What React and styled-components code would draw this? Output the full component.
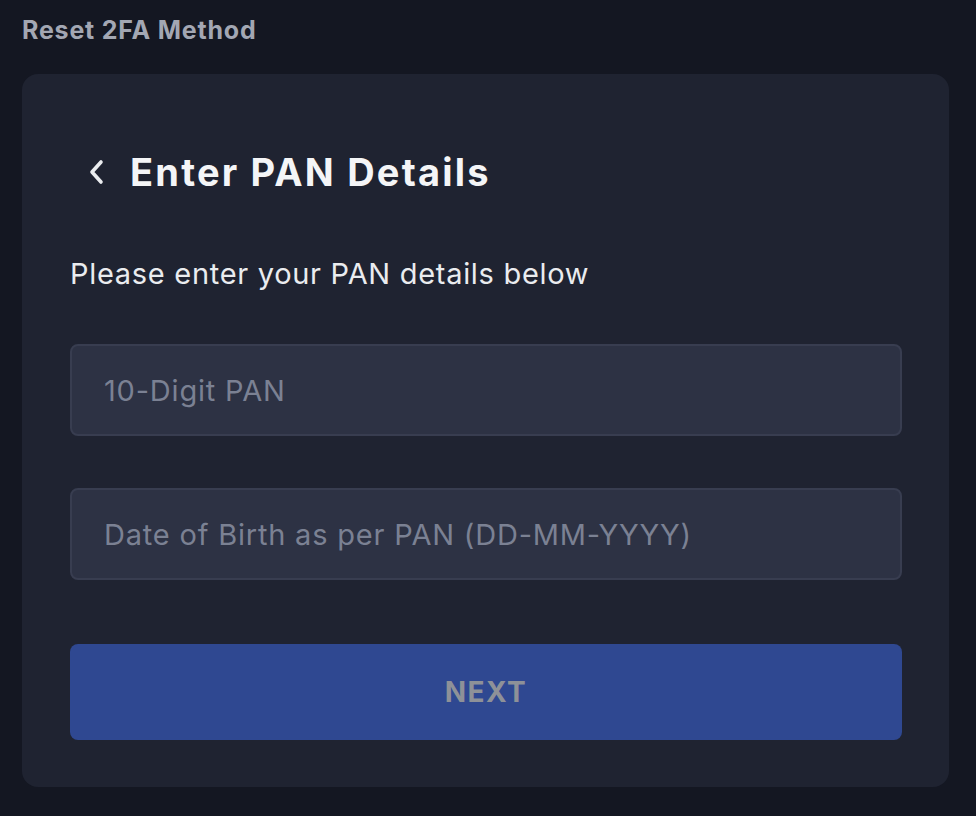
import React from "react";
import styled, { createGlobalStyle } from "styled-components";

const Global = createGlobalStyle`
  html, body { margin: 0; padding: 0; background: #141722; }
  body { font-family: Inter, "Noto Sans", sans-serif; }
  * { box-sizing: border-box; }
`;

const Page = styled.div`
  width: 976px;
  height: 816px;
  background: #141722;
  padding: 12px 27px 0 22px;
  display: flex;
  flex-direction: column;
`;

const PageTitle = styled.h1`
  margin: 0;
  font-size: 25px;
  line-height: 36px;
  font-weight: 700;
  color: #a3a7b3;
  letter-spacing: 0.8px;
`;

const Card = styled.section`
  margin-top: 26px;
  background: #1f2331;
  border-radius: 16px;
  padding: 70px 47px 47px 48px;
  display: flex;
  flex-direction: column;
`;

const HeadingRow = styled.div`
  display: flex;
  align-items: center;
  gap: 22px;
  padding-left: 14px;
`;

const BackButton = styled.button`
  background: none;
  border: 0;
  padding: 0;
  width: 24px;
  height: 30px;
  display: flex;
  align-items: center;
  justify-content: center;
  color: #eaecef;
  cursor: pointer;
`;

const Heading = styled.h2`
  margin: 0;
  font-size: 38px;
  line-height: 56px;
  font-weight: 700;
  color: #f4f5f7;
  letter-spacing: 2.2px;
`;

const Subtitle = styled.p`
  margin: 54px 0 0;
  font-size: 29px;
  line-height: 40px;
  color: #eaecef;
  letter-spacing: 0.7px;
`;

const Field = styled.input`
  margin-top: ${(p) => p.$gap}px;
  width: 100%;
  height: 92px;
  border-radius: 8px;
  border: 2px solid #383d50;
  background: #2d3244;
  padding: 0 32px;
  font-family: inherit;
  font-size: 29px;
  color: #eaecef;
  outline: none;
  letter-spacing: 0.8px;
  &::placeholder { color: #7b8193; }
`;

const NextButton = styled.button`
  margin-top: 64px;
  width: 100%;
  height: 96px;
  border: 0;
  border-radius: 8px;
  background: #2f4891;
  color: #8e9198;
  font-family: inherit;
  font-size: 28px;
  font-weight: 700;
  letter-spacing: 1.5px;
  cursor: not-allowed;
`;

export default function App() {
  return (
    <>
      <Global />
      <Page>
        <PageTitle>Reset 2FA Method</PageTitle>
        <Card>
          <HeadingRow>
            <BackButton aria-label="Back">
              <svg width="20" height="30" viewBox="0 0 20 30" fill="none">
                <path d="M15 5 L6 15 L15 25" stroke="currentColor" strokeWidth="3.6" strokeLinecap="round" strokeLinejoin="round" />
              </svg>
            </BackButton>
            <Heading>Enter PAN Details</Heading>
          </HeadingRow>
          <Subtitle>Please enter your PAN details below</Subtitle>
          <Field $gap={50} placeholder="10-Digit PAN" />
          <Field $gap={52} placeholder="Date of Birth as per PAN (DD-MM-YYYY)" />
          <NextButton disabled>NEXT</NextButton>
        </Card>
      </Page>
    </>
  );
}
